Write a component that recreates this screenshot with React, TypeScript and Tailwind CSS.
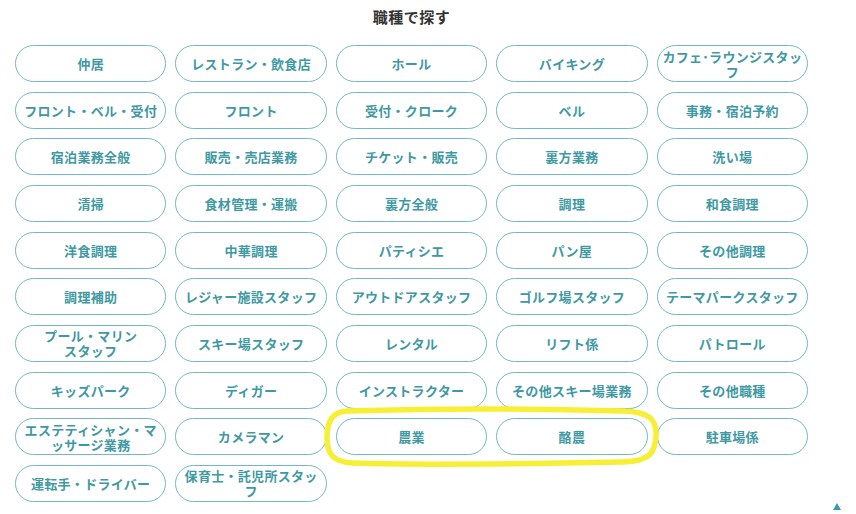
import React from "react";

const jobs: string[] = [
  "仲居",
  "レストラン・飲食店",
  "ホール",
  "バイキング",
  "カフェ･ラウンジスタッ\nフ",
  "フロント・ベル・受付",
  "フロント",
  "受付・クローク",
  "ベル",
  "事務・宿泊予約",
  "宿泊業務全般",
  "販売・売店業務",
  "チケット・販売",
  "裏方業務",
  "洗い場",
  "清掃",
  "食材管理・運搬",
  "裏方全般",
  "調理",
  "和食調理",
  "洋食調理",
  "中華調理",
  "パティシエ",
  "パン屋",
  "その他調理",
  "調理補助",
  "レジャー施設スタッフ",
  "アウトドアスタッフ",
  "ゴルフ場スタッフ",
  "テーマパークスタッフ",
  "プール・マリン\nスタッフ",
  "スキー場スタッフ",
  "レンタル",
  "リフト係",
  "パトロール",
  "キッズパーク",
  "ディガー",
  "インストラクター",
  "その他スキー場業務",
  "その他職種",
  "エステティシャン・マ\nッサージ業務",
  "カメラマン",
  "農業",
  "酪農",
  "駐車場係",
  "運転手・ドライバー",
  "保育士・託児所スタッ\nフ",
];

const JobButton = ({ label }: { label: string }) => {
  return (
    <a
      href="#"
      className="flex h-[37px] items-center justify-center rounded-full border border-[#72b9bf] bg-white px-1 text-center text-[13px] font-bold leading-[15px] tracking-[0.3px] text-[#3f99a2] whitespace-pre-line"
    >
      {label}
    </a>
  );
};

const App = () => {
  return (
    <div
      className="relative h-[514px] w-[856px] overflow-hidden bg-white"
      style={{ fontFamily: '"Noto Sans CJK JP", "Noto Sans", sans-serif' }}
    >
      <div className="relative w-[823px] px-[15px] pt-[7px]">
        <h2 className="text-center text-[15px] font-bold leading-[20px] tracking-[0.5px] text-[#333333]">
          職種で探す
        </h2>
        <div className="mt-[18px] grid grid-cols-5 gap-x-[9px] gap-y-[9.67px]">
          {jobs.map((job) => (
            <JobButton key={job} label={job} />
          ))}
        </div>

        {/* highlight marker around 農業 / 酪農 */}
        <svg
          className="pointer-events-none absolute left-[323px] top-[406px]"
          width="338"
          height="62"
          viewBox="0 0 338 62"
          fill="none"
        >
          <path
            d="M24 5 C90 3, 200 2, 300 5 C325 6, 334 12, 333 30 C332 48, 326 55, 300 56 C200 58, 90 59, 30 57 C10 56, 4 48, 4 32 C4 14, 10 6, 24 5 Z"
            stroke="#f7ef36"
            strokeWidth="5.5"
            strokeLinejoin="round"
          />
        </svg>
      </div>

      {/* back to top */}
      <div className="absolute left-[833px] top-[503px] h-0 w-0 border-x-[4.5px] border-b-[7px] border-x-transparent border-b-[#3a9aa5]" />
    </div>
  );
};

export default App;
